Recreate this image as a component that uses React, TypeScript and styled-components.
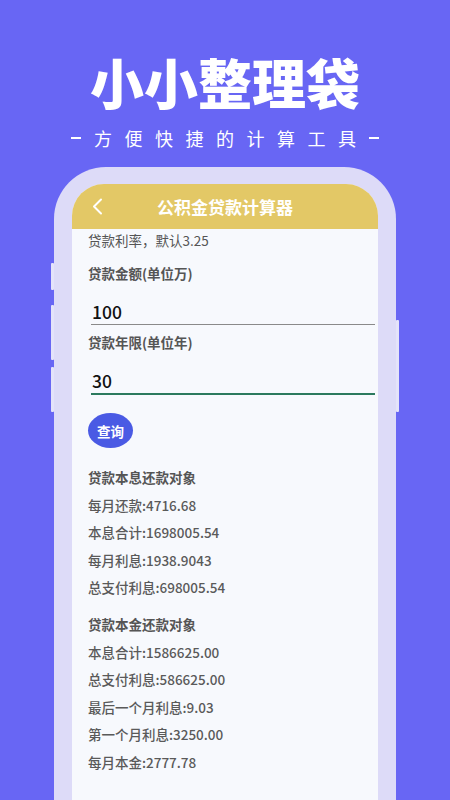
import React from "react";
import styled, { createGlobalStyle } from "styled-components";

const GlobalStyle = createGlobalStyle`
  html, body {
    margin: 0;
    padding: 0;
    background: #6866f4;
  }
  * {
    box-sizing: border-box;
  }
`;

const Page = styled.div`
  width: 450px;
  height: 800px;
  overflow: hidden;
  background: #6866f4;
  font-family: "Noto Sans CJK SC", "Noto Sans", sans-serif;
  display: flex;
  flex-direction: column;
  align-items: center;
`;

const Title = styled.h1`
  margin: 55px 0 0;
  font-size: 54px;
  line-height: 54px;
  font-weight: 900;
  color: #ffffff;
  letter-spacing: 0;
`;

const Subtitle = styled.div`
  margin-top: 20px;
  font-size: 18px;
  line-height: 18px;
  color: #ffffff;
  display: flex;
  align-items: center;
  gap: 13px;
`;

const Dash = styled.span`
  width: 10px;
  height: 1.5px;
  background: #ffffff;
`;

const Chars = styled.span`
  letter-spacing: 12.5px;
  margin-right: -12.5px;
`;

const Phone = styled.div`
  position: relative;
  margin-top: 20px;
  width: 342px;
  flex: 1;
  background: #dddbf8;
  border-radius: 52px 52px 0 0;
  padding: 17px 18px 0;
  display: flex;
`;

const SideKey = styled.span<{ $side: "left" | "right"; $top: number; $h: number }>`
  position: absolute;
  ${(p) => (p.$side === "left" ? "left: -3px;" : "right: -3px;")}
  top: ${(p) => p.$top}px;
  width: 3px;
  height: ${(p) => p.$h}px;
  background: #e4e3fa;
  border-radius: 1px;
`;

const Screen = styled.div`
  flex: 1;
  background: #f7f9fd;
  border-radius: 32px 32px 0 0;
  overflow: hidden;
  display: flex;
  flex-direction: column;
`;

const Header = styled.div`
  height: 45px;
  background: #e3c866;
  display: grid;
  grid-template-columns: 50px 1fr 50px;
  align-items: center;
`;

const Back = styled.div`
  display: flex;
  align-items: center;
  padding-left: 20px;
`;

const HeaderTitle = styled.div`
  text-align: center;
  color: #ffffff;
  font-size: 17px;
  font-weight: 700;
`;

const Body = styled.div`
  padding: 0 3px 0 16px;
  color: #555555;
`;

const Hint = styled.div`
  font-size: 13.5px;
  line-height: 22px;
  color: #555555;
`;

const Label = styled.div<{ $gap: number }>`
  margin-top: ${(p) => p.$gap}px;
  font-size: 13.5px;
  line-height: 22px;
  font-weight: 700;
  color: #555555;
`;

const Field = styled.div<{ $focused?: boolean }>`
  margin-left: 3px;
  padding: 16px 0 0 1px;
  font-size: 17.5px;
  line-height: 24px;
  font-weight: 500;
  color: #111111;
  border-bottom: ${(p) => (p.$focused ? "2px solid #2b7a5e" : "1px solid #8a8a8a")};
`;

const QueryButton = styled.button`
  margin-top: 18px;
  width: 45px;
  height: 35px;
  border: none;
  border-radius: 50%;
  background: #4a5ae4;
  color: #ffffff;
  font-family: inherit;
  font-size: 13.5px;
  font-weight: 700;
  padding: 0;
`;

const Group = styled.div<{ $gap: number }>`
  margin-top: ${(p) => p.$gap}px;
`;

const GroupTitle = styled.div`
  font-size: 13.5px;
  line-height: 27.6px;
  font-weight: 700;
  color: #555555;
`;

const Row = styled.div`
  font-size: 13.5px;
  line-height: 27.6px;
  font-weight: 500;
  color: #5a5a5a;
`;

const groups = [
  {
    title: "贷款本息还款对象",
    gap: 16,
    rows: [
      "每月还款:4716.68",
      "本息合计:1698005.54",
      "每月利息:1938.9043",
      "总支付利息:698005.54",
    ],
  },
  {
    title: "贷款本金还款对象",
    gap: 9,
    rows: [
      "本息合计:1586625.00",
      "总支付利息:586625.00",
      "最后一个月利息:9.03",
      "第一个月利息:3250.00",
      "每月本金:2777.78",
    ],
  },
];

export default function App() {
  return (
    <Page>
      <GlobalStyle />
      <Title>小小整理袋</Title>
      <Subtitle>
        <Dash />
        <Chars>方便快捷的计算工具</Chars>
        <Dash />
      </Subtitle>
      <Phone>
        <SideKey $side="left" $top={96} $h={27} />
        <SideKey $side="left" $top={138} $h={55} />
        <SideKey $side="left" $top={200} $h={45} />
        <SideKey $side="right" $top={153} $h={92} />
        <Screen>
          <Header>
            <Back>
              <svg width="11" height="17" viewBox="0 0 11 17">
                <path
                  d="M9 1.5 L2 8.5 L9 15.5"
                  fill="none"
                  stroke="#ffffff"
                  strokeWidth="2"
                  strokeLinecap="round"
                  strokeLinejoin="round"
                />
              </svg>
            </Back>
            <HeaderTitle>公积金贷款计算器</HeaderTitle>
            <span />
          </Header>
          <Body>
            <Hint>贷款利率，默认3.25</Hint>
            <Label $gap={11}>贷款金额(单位万)</Label>
            <Field>100</Field>
            <Label $gap={6}>贷款年限(单位年)</Label>
            <Field $focused>30</Field>
            <QueryButton>查询</QueryButton>
            {groups.map((g, i) => (
              <Group key={i} $gap={g.gap}>
                <GroupTitle>{g.title}</GroupTitle>
                {g.rows.map((r, j) => (
                  <Row key={j}>{r}</Row>
                ))}
              </Group>
            ))}
          </Body>
        </Screen>
      </Phone>
    </Page>
  );
}
